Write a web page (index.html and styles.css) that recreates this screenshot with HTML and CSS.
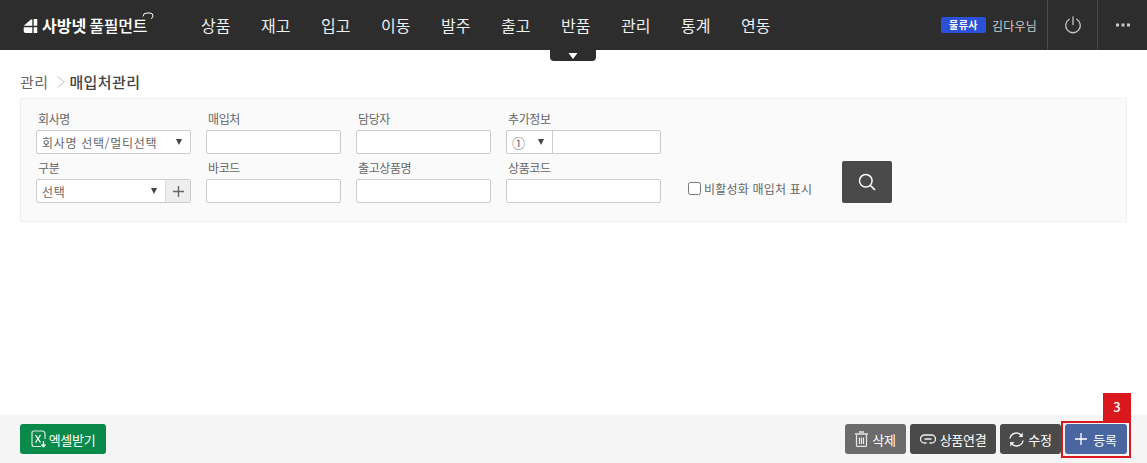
FILE: index.html
```html
<!DOCTYPE html>
<html lang="ko">
<head>
<meta charset="utf-8">
<title>매입처관리</title>
<link rel="stylesheet" href="styles.css">
</head>
<body>
<header class="top">
  <div class="logo">
    <svg class="logo-mark" width="15" height="14" viewBox="0 0 15 15.5"><path fill="#fff" d="M0 7.5 L8 0.5 H9.5 V7.5 H0 Z M11 0 H15 V7.5 H11 Z M0 9 H9.5 V15.5 H2 Q0 15.5 0 13.5 Z M11 9 H15 V15.5 H11 Z"/></svg>
    <span class="logo-a">사방넷</span>
    <span class="logo-b">풀필먼트</span>
    <svg class="logo-roof" width="12" height="12" viewBox="0 0 12 12"><path fill="none" stroke="#fff" d="M1 4.5 Q1 1 5 1 H8 Q11 1 11 4 Q11 6 9 6.5"/></svg>
  </div>
  <nav class="nav">
    <a>상품</a><a>재고</a><a>입고</a><a>이동</a><a>발주</a><a>출고</a><a>반품</a><a>관리</a><a>통계</a><a>연동</a>
  </nav>
  <div class="user">
    <span class="badge">물류사</span>
    <span class="uname">김다우님</span>
    <button class="tool" aria-label="로그아웃">
      <svg width="18" height="18" viewBox="0 0 18 18"><path fill="none" stroke="#c4c4c4" stroke-width="1.3" stroke-linecap="round" d="M5.2 3.2 A7.3 7.3 0 1 0 12.8 3.2 M9 1 V8.5"/></svg>
    </button>
    <button class="tool" aria-label="더보기">
      <svg width="14" height="4" viewBox="0 0 14 4"><path fill="#c8c8c8" d="M0 0.5h3v3H0zM5.5 0.5h3v3h-3zM11 0.5h3v3h-3z"/></svg>
    </button>
  </div>
  <div class="drop"><svg width="10" height="6" viewBox="0 0 10 6"><path fill="#fff" d="M0.5 0H9.5L5 6Z"/></svg></div>
</header>

<main class="main">
  <div class="crumb">
    <span class="c-parent">관리</span>
    <svg class="c-sep" width="10" height="14" viewBox="0 0 10 14"><path fill="none" stroke="#c4c4c4" d="M1.5 1.5 L8.5 7 L1.5 12.5"/></svg>
    <strong class="c-now">매입처관리</strong>
  </div>

  <section class="panel">
    <div class="fields">
      <div class="field f-wide">
        <label>회사명</label>
        <div class="box sel"><span>회사명 선택/멀티선택</span><i class="caret"></i></div>
      </div>
      <div class="field f-narrow"><label>매입처</label><div class="box"></div></div>
      <div class="field f-narrow"><label>담당자</label><div class="box"></div></div>
      <div class="field f-wide">
        <label>추가정보</label>
        <div class="box split">
          <div class="mini"><span class="circled">①</span><i class="caret"></i></div>
        </div>
      </div>
      <div class="spacer"></div>

      <div class="field f-wide">
        <label>구분</label>
        <div class="box split">
          <div class="sel grow"><span>선택</span><i class="caret"></i></div>
          <div class="plus"><svg width="11" height="11" viewBox="0 0 11 11"><path fill="none" stroke="#666" stroke-width="1.4" d="M5.5 0V11M0 5.5H11"/></svg></div>
        </div>
      </div>
      <div class="field f-narrow"><label>바코드</label><div class="box"></div></div>
      <div class="field f-narrow"><label>출고상품명</label><div class="box"></div></div>
      <div class="field f-wide"><label>상품코드</label><div class="box"></div></div>
      <div class="extra">
        <label class="check"><span class="tick"></span>비활성화 매입처 표시</label>
        <button class="search" aria-label="검색">
          <svg width="18" height="18" viewBox="0 0 18 18"><circle cx="7.8" cy="7.8" r="6.3" fill="none" stroke="#fff" stroke-width="1.5"/><path stroke="#fff" stroke-width="1.7" d="M12.3 12.3 L17 17"/></svg>
        </button>
      </div>
    </div>
  </section>
</main>

<footer class="foot">
  <button class="btn green">
    <svg width="16" height="18" viewBox="0 0 16 18"><path fill="none" stroke="#d7eadf" stroke-width="1.2" d="M10 16.5H3Q1 16.5 1 14.5V3Q1 1 3 1H11Q14 1 14 4V9"/><path fill="none" stroke="#fff" stroke-width="1.3" d="M4.5 5L9.5 12.5M9.5 5L4.5 12.5M12.5 11V16.5M10.5 14.5L12.5 16.8L14.5 14.5"/></svg>
    엑셀받기
  </button>
  <div class="foot-right">
    <button class="btn grey">
      <svg width="13" height="16" viewBox="0 0 13 16"><path fill="none" stroke="#e8e8e8" stroke-width="1.2" d="M1.5 4V14.5Q1.5 15.4 2.5 15.4H10.5Q11.5 15.4 11.5 14.5V4M4.5 6.5V13M6.5 6.5V13M8.5 6.5V13"/><path stroke="#e8e8e8" stroke-width="1.4" d="M0 3H13M4 1H9"/></svg>
      삭제
    </button>
    <button class="btn dark wide">
      <svg width="16" height="10" viewBox="0 0 16 10"><path fill="none" stroke="#eee" stroke-width="1.3" d="M6.5 9H4.5A4 4 0 0 1 4.5 1H11.5A4 4 0 0 1 11.5 9H9.5M4.5 5H11.5"/></svg>
      상품연결
    </button>
    <button class="btn dark">
      <svg width="15" height="15" viewBox="0 0 15 15"><path fill="none" stroke="#eee" stroke-width="1.4" d="M1 6.5A6.5 6.5 0 0 1 12.5 3.5M14 8.5A6.5 6.5 0 0 1 2.5 11.5"/><path fill="#eee" d="M13.8 0.5V5H9.5ZM1.2 14.5V10H5.5Z"/></svg>
      수정
    </button>
    <div class="mark">
      <span class="mark-no">3</span>
      <button class="btn blue">
        <svg width="12" height="12" viewBox="0 0 12 12"><path fill="none" stroke="#fff" stroke-width="1.3" d="M6 0V12M0 6H12"/></svg>
        등록
      </button>
    </div>
  </div>
</footer>
</body>
</html>
```

FILE: styles.css
```css
* { box-sizing: border-box; }
html, body { margin: 0; height: 100%; }
body {
  display: flex;
  flex-direction: column;
  height: 463px;
  overflow: hidden;
  background: #fff;
  color: #555;
  font-family: "Noto Sans CJK KR", "Noto Sans", sans-serif;
  font-size: 12px;
}
button { font: inherit; border: 0; padding: 0; cursor: pointer; }

.top {
  position: relative;
  flex: none;
  display: flex;
  align-items: center;
  height: 50px;
  padding-left: 23px;
  background: #2d2d2d;
  color: #fff;
}
.logo { position: relative; display: flex; align-items: center; width: 178px; height: 50px; }
.logo-mark { flex: none; margin: 2px 4px 0 0; }
.logo-a { font-size: 16px; font-weight: 700; margin-right: 3px; }
.logo-b { font-size: 16px; font-weight: 500; letter-spacing: -0.2px; }
.logo-roof { position: absolute; left: 119px; top: 12px; }
.nav { display: flex; }
.nav a { width: 60px; font-size: 16px; color: #efefef; line-height: 50px; }
.user { display: flex; align-items: center; margin-left: auto; height: 50px; }
.badge {
  width: 45px; height: 16px; margin-right: 6px;
  border-radius: 2px;
  background: #2c50d8;
  color: #fff;
  font-size: 10px; font-weight: 700;
  line-height: 16px; text-align: center;
  letter-spacing: 0.4px;
}
.uname { width: 55px; font-size: 12px; color: #ccc; letter-spacing: 0.2px; }
.tool {
  display: flex; align-items: center; justify-content: center;
  width: 50px; height: 50px;
  background: none;
  border-left: 1px solid #4b4b4b;
}
.drop {
  position: absolute; left: 550px; top: 50px;
  display: flex; align-items: center; justify-content: center;
  width: 46px; height: 11px;
  background: #2d2d2d;
  border-radius: 0 0 4px 4px;
}

.main { flex: 1; padding: 0 20px; }
.crumb { display: flex; align-items: center; height: 48px; padding-top: 15px; font-size: 15px; letter-spacing: 0.4px; }
.c-parent { color: #666; }
.c-sep { margin: 0 3px 0 8px; }
.c-now { color: #444; font-weight: 500; }

.panel {
  height: 124px;
  padding: 12px 15px 0;
  background: #fafafa;
  border: 1px solid #f0f0f0;
}
.fields {
  display: grid;
  grid-template-columns: 155px 135px 135px 155px 1fr;
  column-gap: 15px;
  row-gap: 6px;
}
.field label { display: block; height: 19px; line-height: 16px; font-size: 12px; letter-spacing: -0.4px; color: #666; padding-left: 2px; }
.box {
  display: flex; align-items: stretch;
  height: 24px;
  background: #fff;
  border: 1px solid #ccc;
  border-radius: 2px;
  font-size: 12px;
  letter-spacing: 0.7px;
  color: #666;
}
.sel { display: flex; align-items: center; justify-content: space-between; padding: 0 5px; }
.box.sel { padding-right: 8px; }
.grow { flex: 1; padding-right: 8px; }
.caret {
  flex: none;
  width: 0; height: 0;
  border-left: 3.5px solid transparent;
  border-right: 3.5px solid transparent;
  border-top: 6px solid #444;
}
.split { overflow: hidden; }
.mini {
  display: flex; align-items: center; justify-content: space-between;
  width: 46px;
  padding: 0 8px 0 5px;
  border-right: 1px solid #ccc;
}
.circled { font-size: 13px; letter-spacing: 0; }
.plus {
  display: flex; align-items: center; justify-content: center;
  width: 25px;
  background: #eee;
  border-left: 1px solid #ddd;
}
.spacer { min-height: 0; }
.extra { position: relative; height: 43px; }
.check {
  position: absolute; left: 12px; top: 20px;
  display: flex; align-items: center;
  font-size: 12px; color: #666;
  letter-spacing: 0.2px;
  white-space: nowrap;
}
.tick {
  width: 13px; height: 13px; margin-right: 3px;
  background: #fff;
  border: 1px solid #777;
  border-radius: 2.5px;
}
.search {
  position: absolute; left: 166px; top: 1px;
  display: flex; align-items: center; justify-content: center;
  width: 50px; height: 42px;
  background: #4a4a4a;
  border-radius: 2px;
}

.foot {
  flex: none;
  display: flex;
  align-items: flex-start;
  justify-content: space-between;
  height: 48px;
  padding: 9px 20px 0;
  background: #f5f5f5;
}
.foot-right { display: flex; gap: 4px; }
.btn {
  display: flex; align-items: center; justify-content: center; gap: 4px;
  height: 30px;
  border-radius: 3px;
  color: #fff;
  font-size: 13px;
  letter-spacing: -0.3px;
  white-space: nowrap;
}
.green { width: 86px; gap: 2px; background: #0a8a4a; }
.grey { width: 61px; background: #6b6b6b; }
.dark { width: 61px; background: #4a4a4a; }
.wide { width: 86px; }
.blue { width: 62px; background: #4a66a0; gap: 6px; }
.mark { position: relative; display: flex; }
.mark::before {
  content: "";
  position: absolute;
  left: -4px; right: -4px; top: -3px; bottom: -4px;
  border: 2px solid #d9181d;
}
.mark-no {
  position: absolute;
  left: 38px; top: -31px;
  width: 28px; height: 28px;
  background: #d9181d;
  color: #fff;
  font-size: 13px; font-weight: 500;
  line-height: 28px; text-align: center;
}
```
